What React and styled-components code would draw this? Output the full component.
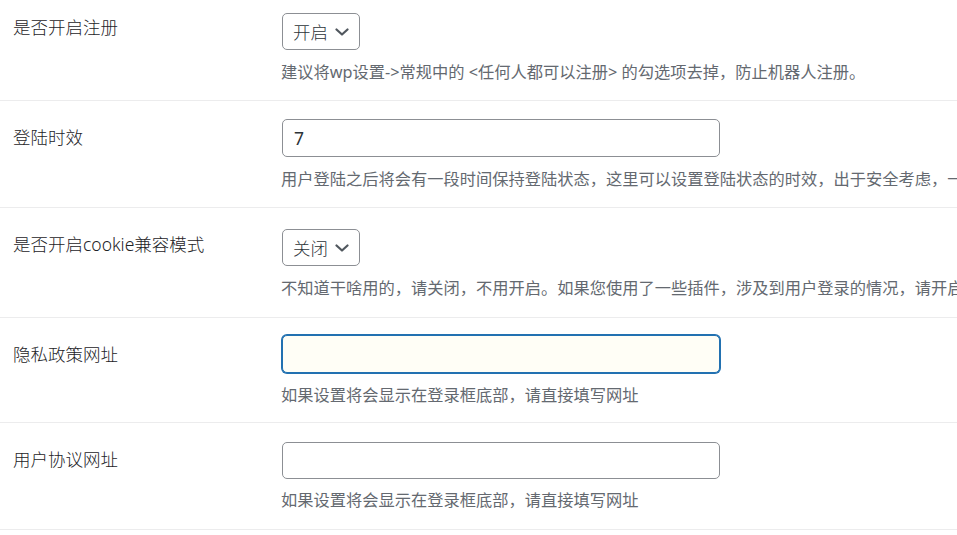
import React from "react";
import styled, { createGlobalStyle } from "styled-components";

const Global = createGlobalStyle`
  html, body {
    margin: 0;
    padding: 0;
    background: #ffffff;
    overflow: hidden;
  }
  body {
    font-family: "Noto Sans", "Noto Sans CJK SC", sans-serif;
    color: #1d2327;
  }
`;

const List = styled.div`
  margin-top: -8.5px;
  width: 957px;
`;

const Row = styled.div`
  display: grid;
  grid-template-columns: 282px 1fr;
  border-bottom: 1px solid #ececed;
`;

const Label = styled.div`
  padding: 24.5px 0 0 13px;
  font-size: 17.5px;
  font-weight: 300;
  line-height: 23px;
  color: #1d2327;
  white-space: nowrap;
`;

const Field = styled.div`
  padding-top: ${(p) => p.$pt}px;
  padding-bottom: ${(p) => p.$pb}px;
  min-width: 0;
`;

const Select = styled.div`
  box-sizing: border-box;
  display: inline-flex;
  align-items: center;
  gap: 7px;
  width: 78px;
  height: 37px;
  padding-left: 10px;
  border: 1px solid #8c8f94;
  border-radius: 5px;
  background: #fff;
  font-size: 17.5px;
  font-weight: 300;
  color: #2c3338;
  vertical-align: top;
`;

const Input = styled.input`
  display: block;
  box-sizing: border-box;
  width: 438px;
  height: ${(p) => p.$h}px;
  margin: 0;
  padding: 0 11px;
  border: 1px solid ${(p) => (p.$focus ? "#2271b1" : "#8c8f94")};
  box-shadow: ${(p) => (p.$focus ? "0 0 0 1px #2271b1" : "none")};
  border-radius: 5px;
  background: ${(p) => (p.$focus ? "#fffef6" : "#fff")};
  font-family: "Noto Sans", "Noto Sans CJK SC", sans-serif;
  font-size: 17.5px;
  color: #2c3338;
  outline: none;
`;

const Desc = styled.p`
  margin: ${(p) => p.$mt}px 0 0 -1px;
  font-size: 16.25px;
  line-height: 24px;
  color: #646970;
  white-space: nowrap;
`;

const Chevron = () => (
  <svg width="14" height="8" viewBox="0 0 14 8" aria-hidden="true">
    <polyline
      points="1.5,1.5 7,6.5 12.5,1.5"
      fill="none"
      stroke="#50575e"
      strokeWidth="2.2"
      strokeLinecap="round"
      strokeLinejoin="round"
    />
  </svg>
);

const rows = [
  {
    label: "是否开启注册",
    type: "select",
    value: "开启",
    pt: 21.5,
    mt: 10,
    pb: 16,
    desc: "建议将wp设置->常规中的 <任何人都可以注册> 的勾选项去掉，防止机器人注册。",
  },
  {
    label: "登陆时效",
    type: "input",
    value: "7",
    h: 37.5,
    pt: 18,
    mt: 10.5,
    pb: 16,
    desc: "用户登陆之后将会有一段时间保持登陆状态，这里可以设置登陆状态的时效，出于安全考虑，一般不建议设置太长时间，单位为天。",
  },
  {
    label: "是否开启cookie兼容模式",
    type: "select",
    value: "关闭",
    pt: 21,
    mt: 9.5,
    pb: 17.5,
    desc: "不知道干啥用的，请关闭，不用开启。如果您使用了一些插件，涉及到用户登录的情况，请开启此项。",
  },
  {
    label: "隐私政策网址",
    type: "input",
    value: "",
    focus: true,
    h: 38,
    pt: 16.5,
    mt: 10,
    pb: 15.5,
    desc: "如果设置将会显示在登录框底部，请直接填写网址",
  },
  {
    label: "用户协议网址",
    type: "input",
    value: "",
    h: 37,
    pt: 19,
    mt: 9,
    pb: 17,
    desc: "如果设置将会显示在登录框底部，请直接填写网址",
  },
];

export default function App() {
  return (
    <>
      <Global />
      <List>
        {rows.map((r) => (
          <Row key={r.label}>
            <Label>{r.label}</Label>
            <Field $pt={r.pt} $pb={r.pb}>
              {r.type === "select" ? (
                <Select>
                  <span>{r.value}</span>
                  <Chevron />
                </Select>
              ) : (
                <Input
                  type="text"
                  readOnly
                  value={r.value}
                  $h={r.h}
                  $focus={r.focus}
                />
              )}
              <Desc $mt={r.mt}>{r.desc}</Desc>
            </Field>
          </Row>
        ))}
      </List>
    </>
  );
}
